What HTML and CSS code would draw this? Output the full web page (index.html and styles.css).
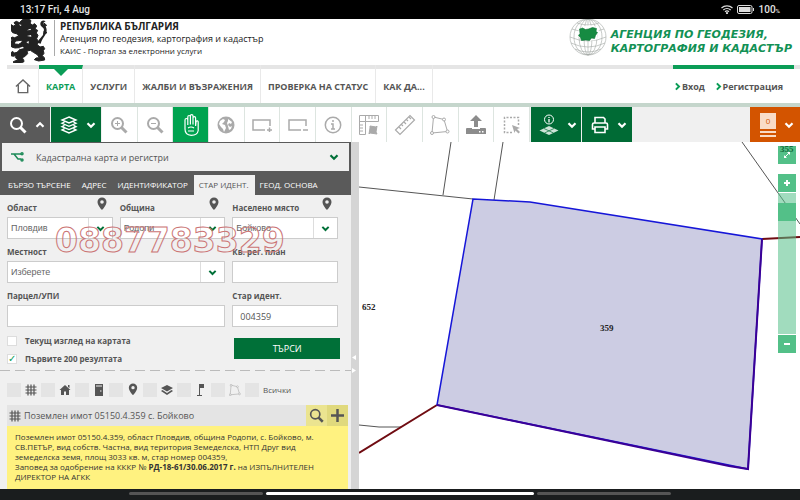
FILE: index.html
```html
<!DOCTYPE html>
<html lang="bg">

<head>
    <meta charset="UTF-8">
    <meta name="viewport" content="width=device-width, initial-scale=1.0">
    <title>КАИС - Портал за електронни услуги</title>
    <link rel="stylesheet" href="styles.css">
</head>

<body>
    <!-- shared icons -->
    <svg class="sprite" aria-hidden="true">
        <symbol id="chevron" viewBox="0 0 10 10"><path d="M1.500 3.200 5 6.700 8.500 3.200" fill="none" stroke="currentColor" stroke-width="2.200" /></symbol>
        <symbol id="search" viewBox="0 0 18 18"><circle cx="7.500" cy="7.500" r="5.500" fill="none" stroke="currentColor" stroke-width="2" /><path d="m11.500 11.500 5 5" stroke="currentColor" stroke-width="3" /></symbol>
        <symbol id="pin" viewBox="0 0 10 14"><path d="M5 .5A4.500 4.500 0 0 0 .5 5C.5 8.500 5 13 5 13s4.500-4.500 4.500-8A4.500 4.500 0 0 0 5 .5zm0 2.700a1.800 1.800 0 1 1 0 3.600 1.800 1.800 0 0 1 0-3.600z" fill="currentColor" /></symbol>
        <symbol id="grid" viewBox="0 0 12 12"><path d="M3 .5v11M6 .5v11M9 .5v11M.5 3h11M.5 6h11M.5 9h11" stroke="currentColor" stroke-width="1.200" /></symbol>
        <symbol id="polygon" viewBox="0 0 20 20"><path d="M3.500 2 14 4.500 17.500 16.500 2 18z" fill="none" stroke="currentColor" /><g fill="#fff" stroke="currentColor"><circle cx="3.500" cy="2" r="1.500" /><circle cx="14" cy="4.500" r="1.500" /><circle cx="17.500" cy="16.500" r="1.500" /><circle cx="2" cy="18" r="1.500" /></g></symbol>
    </svg>

    <div class="status">
        <span>13:17 Fri, 4 Aug</span>
        <span class="status__right">
            <svg width="12" height="9" viewBox="0 0 12 9" fill="none" stroke="#ddd" stroke-width="1.200"><path d="M.5 3a8 8 0 0 1 11 0M2.300 5a5.500 5.500 0 0 1 7.400 0M4 6.800a3 3 0 0 1 4 0" /><circle cx="6" cy="8" r=".5" /></svg>
            <svg width="18" height="9" viewBox="0 0 18 9"><rect x=".5" y=".5" width="14.500" height="8" rx="1.500" fill="none" stroke="#ddd" /><path d="M2 2h11.500v5H2zM16 3h1v3h-1z" fill="#ddd" /></svg>
            <span>100<small>%</small></span>
        </span>
    </div>

    <header class="header">
        <svg class="header__lion" width="37" height="44" viewBox="33 57 111 132" fill="#222" stroke="#222" stroke-width="3">
            <path d="M70 57h18l5 5-3 8 7 5 7-4 6 7-5 9 8 4-4 8 5 7-4 10 5 8-3 10 8 7 10-2 4 7-4 6 2 8-5 7 6 6 1 7-18 3-13-4 5-5 10-1-6-9-12-7-9-6-10 2 2 8-9 9-8 3 5 6 1 6-12 5-14 1-7-5 7-4 8-1-8-9 3-6-9 3-7-2-1-8 6-5 5 5 8-2 8-8-1-6-13 1-10-3-3-7 5-6 6-1 1 5 12 1 11-7-3-5-17 2-5 8-9-2-1-6 7-2-7-5 4-5 8 2 12-5-4-6-14-4-4-6-10 4-6-5 2-7 9-1-4-6 7-4 8 5 7-3-5-7 7-4 9 4z" />
            <path d="M112 128c5-14 22-20 20-38-1-10-12-8-11-20 1-8 11-12 16-5-7 0-9 6-4 10 7 6 10 18 3 29-5 9-11 14-14 27z" stroke="none" />
            <path d="m132 69 8 7-8 5zM132 92l9 6-10 5z" />
            <path d="m57 73 8 2-4 3zM91 86l-10 5 12-1zM93 105l-12 3 13 2zM79 126l8-2-2 7zM57 144l11-4 4 4-13 4z" fill="#fff" stroke="none" />
        </svg>
        <div class="header__titles">
            <strong>РЕПУБЛИКА БЪЛГАРИЯ</strong>
            <span>Агенция по геодезия, картография и кадастър</span>
            <small>КАИС - Портал за електронни услуги</small>
        </div>
        <svg class="header__globe" width="38" height="38" viewBox="0 0 38 38" fill="none" stroke="#a2a8a5" stroke-width=".6">
            <circle cx="19" cy="18" r="18" />
            <ellipse cx="19" cy="18" rx="14" ry="18" /><ellipse cx="19" cy="18" rx="9" ry="18" /><ellipse cx="19" cy="18" rx="4" ry="18" />
            <path d="M19 0v36M3 10q16 6 32 0M1 18q18 8 36 0M2 24q17 8 34 0M6 30q13 6 26 0M8 4q11 4 22 0" />
            <path d="M11 9q8-5 17-1l2 4-2 4 1 4q-9 4-18-1l-3-4z" fill="#fff" stroke="none" />
            <path d="m10.500 10 3-1 3 1.500 3-.5 4-1.500 4 1-.5 3 1.500 1-2 3-1 3-3-.5-2 2.500-4-.5-4 .5-1-3-2-2 1.500-2z" fill="#168b42" stroke="#0c7435" />
        </svg>
        <div class="header__agency">АГЕНЦИЯ ПО ГЕОДЕЗИЯ,<br>КАРТОГРАФИЯ И КАДАСТЪР</div>
    </header>

    <nav class="nav">
        <a class="nav__item nav__item--home" href="#" aria-label="Начало"><svg width="16" height="16" viewBox="0 0 17 16" fill="none" stroke="#666" stroke-width="1.500"><path d="m1 8.500 7.500-7 7.500 7M3.500 7v8h10V7" /></svg></a>
        <a class="nav__item nav__item--active" href="#">КАРТА</a>
        <a class="nav__item" href="#">УСЛУГИ</a>
        <a class="nav__item" href="#">ЖАЛБИ И ВЪЗРАЖЕНИЯ</a>
        <a class="nav__item" href="#">ПРОВЕРКА НА СТАТУС</a>
        <a class="nav__item" href="#">КАК ДА...</a>
        <div class="nav__user">
            <a href="#"><svg class="nav__arrow" width="9" height="9"><use href="#chevron" /></svg>Вход</a>
            <a href="#"><svg class="nav__arrow" width="9" height="9"><use href="#chevron" /></svg>Регистрация</a>
        </div>
    </nav>

    <div class="toolbar">
        <button class="tool tool--wide tool--grey" aria-label="Търсене"><svg width="18" height="18"><use href="#search" /></svg><svg class="up" width="10" height="10"><use href="#chevron" /></svg></button>
        <button class="tool tool--wide tool--dark" aria-label="Слоеве"><svg width="18" height="18" viewBox="0 0 18 18" fill="none" stroke="currentColor" stroke-width="1.400"><path d="m9 1 7 3-7 3-7-3zM4.500 6 2 7.300l7 3 7-3L13.500 6M4.500 9.300 2 10.600l7 3 7-3-2.500-1.300M4.500 12.600 2 13.900l7 3 7-3-2.500-1.300" /></svg><svg width="10" height="10"><use href="#chevron" /></svg></button>
        <div class="toolbar__group">
            <button class="tool" aria-label="Приближи"><svg width="18" height="18"><use href="#search" /><path d="M5 7.500h5M7.500 5v5" stroke="currentColor" /></svg></button>
            <button class="tool" aria-label="Отдалечи"><svg width="18" height="18"><use href="#search" /><path d="M5 7.500h5" stroke="currentColor" /></svg></button>
            <button class="tool tool--active" aria-label="Местене"><svg width="18" height="22" viewBox="0 0 18 22" fill="none" stroke="currentColor" stroke-width="1.200"><path d="M3 15V6q0-1.500 1.400-1.500T5.800 6v5V3q0-1.500 1.300-1.500T8.400 3v7.500V2q0-1.400 1.300-1.400T11 2v8.500V4q0-1.400 1.300-1.400T13.600 4v8l.4-4q.4-1.400 1.400-1.100t.8 1.600v8q-.7 4.800-7 4.800Q3 21 3 15zM6 14q3-2 6 0M6 17h6" /></svg></button>
            <button class="tool" aria-label="Цял изглед"><svg width="18" height="18" viewBox="0 0 18 18"><circle cx="9" cy="9" r="8.500" fill="currentColor" /><path d="m3 5 3-2 2 1-1 2-2 2 3 1 1 3-2 4-1-3-2-2-2-3zM11 3l4 3-1 2-2-1-1 2 2 2 2-1-1 3-2 1-1-4-1-3 1-2z" fill="#fff" /></svg></button>
            <button class="tool" aria-label="Приближи по правоъгълник"><svg width="20" height="14" viewBox="0 0 20 14" fill="none" stroke="currentColor" stroke-width="1.500"><path d="M13 12H1V2h17v6M15 12h5M17.500 9.500v5" /></svg></button>
            <button class="tool" aria-label="Отдалечи по правоъгълник"><svg width="20" height="14" viewBox="0 0 20 14" fill="none" stroke="currentColor" stroke-width="1.500"><path d="M13 12H1V2h17v6M15 12h5" /></svg></button>
            <button class="tool" aria-label="Информация"><svg width="18" height="18" viewBox="0 0 18 18" fill="none" stroke="currentColor" stroke-width="1.500"><circle cx="9" cy="9" r="7.700" /><path d="M9 4v2M7 8h2v5M7 13h4" /></svg></button>
            <button class="tool" aria-label="Мерене на площ"><svg width="22" height="22" viewBox="0 0 22 22" fill="none" stroke="currentColor"><path d="M1.500 1.500h19v6h-13v13h-6zM7.500 1.500v6h-6M11 2v3M14 2v3M17 2v3M2 11h3M2 14h3M2 17h3" /><path d="m12 12 6 1 1-1-1 6 1 2-7-1-1 1 1-6z" fill="currentColor" /></svg></button>
            <button class="tool" aria-label="Мерене на разстояние"><svg width="22" height="22" viewBox="0 0 22 22" fill="none" stroke="currentColor" stroke-width="1.200"><path d="M1.500 16 16 1.500l4.500 4.500L6 20.500zM5 13l2 2M7.500 10.500 9 12M10 8l2 2M12.500 5.500 14 7M15 3l2 2" /></svg></button>
            <button class="tool" aria-label="Полигон"><svg width="20" height="20"><use href="#polygon" /></svg></button>
            <button class="tool tool--strong" aria-label="Качване"><svg width="20" height="20" viewBox="0 0 20 20" fill="currentColor"><path d="m10 0 6 6h-4v6H8V6H4zM1 13h5v1h8v-1h5q1 0 1 1v5H0v-5q0-1 1-1z" /><path d="M13 16h1.500v1.500H13zM16 16h1.500v1.500H16z" fill="#fff" /></svg></button>
            <button class="tool" aria-label="Избор"><svg width="18" height="18" viewBox="0 0 18 18"><path d="M9 16.500H1.500v-15h14V9" fill="none" stroke="currentColor" stroke-width="1.500" stroke-dasharray="2 1.500" /><path d="m9 9 8 3-3 1 3 3-1.500 1.500-3-3-1 2.500z" fill="currentColor" /></svg></button>
        </div>
        <button class="tool tool--wide tool--dark" aria-label="Информация за слоеве"><svg width="20" height="22" viewBox="0 0 20 22"><g fill="none" stroke="currentColor"><circle cx="10" cy="5.500" r="4.500" /><path d="M10 3v1M10 5v3.500" stroke-width="1.300" /></g><path d="m10 12 9.500 4.500L10 21 .5 16.500z" fill="#cfe5d8" /><path d="m5 14.500 9.500 4.500M15 14.500 5.500 19" stroke="#006b35" stroke-width=".7" /></svg><svg width="10" height="10"><use href="#chevron" /></svg></button>
        <button class="tool tool--wide tool--dark" aria-label="Печат"><svg width="18" height="18" viewBox="0 0 18 18" fill="none" stroke="currentColor" stroke-width="1.600"><path d="M4 7V1.500h8.500L14 3v4M4 13H1.500V8.500q0-1.500 1.500-1.500h12q1.500 0 1.500 1.500V13H14M4 11h10v5.500H4z" /></svg><svg width="10" height="10"><use href="#chevron" /></svg></button>
        <button class="tool tool--wide tool--cart" aria-label="Количка"><span class="cart">0</span><svg width="10" height="10"><use href="#chevron" /></svg></button>
    </div>

    <main class="main">
        <section class="panel">
            <button class="source">
                <svg width="14" height="10" viewBox="0 0 14 10" fill="none" stroke="#1d8a58" stroke-width="1.500"><path d="M1 2h3l4 5h3M4 2h7" /><circle cx="12" cy="1.800" r="1" /><circle cx="12" cy="8" r="1" /></svg>
                <span>Кадастрална карта и регистри</span>
                <svg class="green" width="10" height="10"><use href="#chevron" /></svg>
            </button>
            <div class="tabs">
                <a href="#">БЪРЗО ТЪРСЕНЕ</a>
                <a href="#">АДРЕС</a>
                <a href="#">ИДЕНТИФИКАТОР</a>
                <a class="active" href="#">СТАР ИДЕНТ.</a>
                <a href="#">ГЕОД. ОСНОВА</a>
            </div>

            <form class="form">
                <div class="field">
                    <label for="region">Област</label><svg class="field__pin" width="10" height="14"><use href="#pin" /></svg>
                    <div class="select"><select id="region"><option>Пловдив</option></select><svg width="9" height="9"><use href="#chevron" /></svg></div>
                </div>
                <div class="field">
                    <label for="municipality">Община</label><svg class="field__pin" width="10" height="14"><use href="#pin" /></svg>
                    <div class="select"><select id="municipality"><option>Родопи</option></select><svg width="9" height="9"><use href="#chevron" /></svg></div>
                </div>
                <div class="field">
                    <label for="place">Населено място</label><svg class="field__pin" width="10" height="14"><use href="#pin" /></svg>
                    <div class="select"><select id="place"><option>Бойково</option></select><svg width="9" height="9"><use href="#chevron" /></svg></div>
                </div>
                <div class="field field--double">
                    <label for="locality">Местност</label>
                    <div class="select"><select id="locality"><option>Изберете</option></select><svg width="9" height="9"><use href="#chevron" /></svg></div>
                </div>
                <div class="field">
                    <label for="block">Кв. рег. план</label>
                    <input id="block" type="text">
                </div>
                <div class="field field--double">
                    <label for="parcel">Парцел/УПИ</label>
                    <input id="parcel" type="text">
                </div>
                <div class="field">
                    <label for="old">Стар идент.</label>
                    <input id="old" type="text" value="004359">
                </div>
                <div class="field--double checks">
                    <label><input type="checkbox">Текущ изглед на картата</label>
                    <label><input type="checkbox" checked>Първите 200 резултата</label>
                </div>
                <button class="form__submit" type="button">ТЪРСИ</button>
                <div class="phone">0887783329</div>
            </form>

            <div class="filters">
                <input type="checkbox" aria-label="Имоти"><svg width="12" height="12"><use href="#grid" /></svg>
                <input type="checkbox" aria-label="Сгради"><svg width="12" height="12" viewBox="0 0 12 12" fill="currentColor"><path d="m6 1 5.500 5H10v5H7V7.500H5V11H2V6H.5zM9 1h1.500v3L9 3z" /></svg>
                <input type="checkbox" aria-label="Обекти"><svg width="12" height="12" viewBox="0 0 12 12"><path d="M2 0h8v12H2z" fill="currentColor" /><path d="M3 2h6M7 7h1.500" stroke="#f0f0f0" /></svg>
                <input type="checkbox" aria-label="Точки"><svg width="12" height="13"><use href="#pin" /></svg>
                <input type="checkbox" aria-label="Слоеве"><svg width="12" height="12" viewBox="0 0 12 12" fill="currentColor"><path d="m6 1 6 3-6 3.500L0 4zM1.500 6 0 7l6 4 6-4-1.500-1L6 9z" /></svg>
                <input type="checkbox" aria-label="Геодезическа основа"><svg width="12" height="14" viewBox="0 0 12 14" fill="currentColor"><path d="M4 1h5v4H5v7h2v1H2v-1h2z" /></svg>
                <input type="checkbox" aria-label="Полигони"><svg class="light" width="12" height="12"><use href="#polygon" /></svg>
                <label><input type="checkbox">Всички</label>
            </div>

            <article class="result">
                <div class="result__head">
                    <svg width="12" height="12"><use href="#grid" /></svg>
                    <h2>Поземлен имот 05150.4.359 с. Бойково</h2>
                    <button aria-label="Покажи"><svg width="15" height="15" viewBox="0 0 18 18"><use href="#search" width="18" height="18" /></svg></button>
                    <button aria-label="Добави"><svg width="13" height="13" viewBox="0 0 13 13"><path d="M6.500 0v13M0 6.500h13" stroke="currentColor" stroke-width="2.500" /></svg></button>
                </div>
                <p class="result__text">Поземлен имот 05150.4.359, област Пловдив, община Родопи, с. Бойково, м.<br>СВ.ПЕТЪР, вид собств. Частна, вид територия Земеделска, НТП Друг вид<br>земеделска земя, площ 3033 кв. м, стар номер 004359,<br>Заповед за одобрение на КККР № <b>РД-18-61/30.06.2017 г.</b> на ИЗПЪЛНИТЕЛЕН<br>ДИРЕКТОР НА АГКК</p>
            </article>
        </section>

        <div class="splitter">
            <svg width="6" height="20" viewBox="0 0 6 20" fill="#fff"><path d="M5 1v5L1 3.500zM1 14v5l4-2.500z" /></svg>
        </div>

        <section class="map">
            <svg class="map__canvas" viewBox="0 0 441 347" preserveAspectRatio="xMinYMin slice">
                <path class="map__line" d="M0 45 114 57M92 0 84 53M144 0 135 58M383 0 441 82M0 283 20 285H42" />
                <path class="map__border" d="M0 311 78 263M403 97 441 95" />
                <path class="map__plot" d="M114 57 171 60 403 97 389 327 78 263z" />
                <path class="map__edge" d="M403 97 389 327 370 324 78 263" />
                <text x="3" y="168">652</text>
                <text x="241" y="189">359</text>
            </svg>
            <div class="zoom">
                <button aria-label="Цял екран"><svg width="8" height="8" viewBox="0 0 8 8" fill="#fff"><path d="M4 1h3v3zM1 4l3 3H1z" /><path d="m2 6 4-4" stroke="#fff" /></svg><span>355</span></button>
                <button class="zoom__in" aria-label="Приближи"><svg width="6" height="6" viewBox="0 0 6 6"><path d="M3 0v6M0 3h6" stroke="#fff" stroke-width="2" /></svg></button>
                <div class="zoom__track"><div class="zoom__handle"></div></div>
                <button aria-label="Отдалечи"><svg width="6" height="6" viewBox="0 0 6 6"><path d="M0 3h6" stroke="#fff" stroke-width="2" /></svg></button>
            </div>
        </section>
    </main>

    <div class="bottom"><span></span><span class="current"></span><span></span></div>
</body>

</html>
```
FILE: styles.css
```css
* {
    box-sizing: border-box;
}

body {
    margin: 0;
    min-height: 100vh;
    display: flex;
    flex-direction: column;
    font-family: "Open Sans", "Noto Sans", sans-serif;
    font-size: 9px;
    color: #555;
    background-color: #fff;
}

a {
    color: inherit;
    text-decoration: none;
}

button,
input,
select {
    font: inherit;
    color: inherit;
    margin: 0;
    padding: 0;
    border: 0;
    border-radius: 0;
    background: none;
}

svg {
    flex: none;
    display: block;
}

.sprite {
    position: absolute;
    width: 0;
    height: 0;
}

.green {
    color: #007038;
}

.up {
    transform: rotate(180deg);
}

/* device status bar */
.status {
    height: 19px;
    padding: 0 20px;
    display: flex;
    align-items: center;
    justify-content: space-between;
    background-color: #000;
    color: #e4e4e4;
    font: 500 10px Roboto, sans-serif;
}

.status__right {
    display: flex;
    align-items: center;
    gap: 4px;
}

.status small {
    font-size: 6px;
}

/* header */
.header {
    height: 46px;
    padding: 0 8px 0 11px;
    display: flex;
    align-items: flex-start;
}

.header__titles {
    margin: 1px 0 0 6px;
    padding-left: 5px;
    height: 36px;
    display: flex;
    flex-direction: column;
    border-left: 1px solid #aaa;
    color: #222;
    white-space: nowrap;
}

.header__titles strong {
    font-size: 10px;
    line-height: 13px;
}

.header__titles span {
    font-size: 9px;
    line-height: 12px;
}

.header__titles small {
    font-size: 8px;
    line-height: 12px;
}

.header__globe {
    margin-left: auto;
}

.header__agency {
    margin: 9px 0 0 4px;
    color: #129155;
    font: italic bold 11px/14px "DejaVu Sans", sans-serif;
    white-space: nowrap;
}

/* main menu */
.nav {
    height: 42px;
    padding: 0 6px 0 7px;
    display: flex;
    border-bottom: 4px solid #c5d6cc;
    font-weight: 700;
    background: linear-gradient(#e5e5e5 4px, transparent 4px) 7px 0 no-repeat;
}

.nav__item {
    padding: 4px 7px 0;
    display: flex;
    align-items: center;
    border-right: 1px solid #e9e9e9;
    white-space: nowrap;
}

.nav__item--home {
    padding-left: 8px;
}

.nav__item--active {
    position: relative;
    border-top: 4px solid #0b9d57;
    padding-top: 0;
    color: #0b9d57;
}

.nav__item--active::before {
    content: "";
    position: absolute;
    top: 0;
    left: 50%;
    margin-left: -7px;
    border: 7px solid transparent;
    border-top-color: #0b9d57;
    border-bottom: 0;
}

.nav__user {
    width: 121px;
    margin-left: auto;
    display: flex;
    align-items: center;
    justify-content: space-between;
    padding-right: 11px;
    border-top: 4px solid #0b9d57;
}

.nav__user a {
    display: flex;
    align-items: center;
}

.nav__arrow {
    color: #0b9d57;
    transform: rotate(-90deg);
}

/* map tools */
.toolbar {
    height: 35px;
    display: flex;
    gap: 1px;
    background-color: #f0f0f0;
}

.toolbar__group {
    flex: 0 0 428px;
    display: flex;
    background-color: #fff;
}

.tool {
    flex: 1;
    display: flex;
    align-items: center;
    justify-content: center;
    border-right: 1px solid #dde5e0;
    color: #aaa;
}

.tool--strong {
    color: #8c8c8c;
}

.tool--active {
    background-color: #00a350;
    color: #fff;
}

.tool--wide {
    flex: 0 0 50px;
    gap: 8px;
    padding-left: 4px;
    border: 0;
    color: #fff;
}

.tool--grey {
    background-color: #5a5a5a;
}

.tool--dark {
    background-color: #006b35;
}

.tool--cart {
    margin-left: auto;
    background-color: #d35400;
}

.cart {
    width: 16px;
    height: 24px;
    border-bottom: 2px solid #f9dcc7;
    background: linear-gradient(#f9dcc7 16px, transparent 16px, transparent 18px, #f9dcc7 18px, #f9dcc7 20px, transparent 20px);
    color: #d35400;
    font-size: 8px;
    line-height: 16px;
}

.main {
    flex: 1;
    display: flex;
}

/* search panel */
.panel {
    flex: 0 0 351px;
    min-width: 0;
    background-color: #f0f0f0;
}

.source {
    width: 100%;
    height: 33px;
    padding: 0 10px 0 8px;
    display: flex;
    align-items: center;
    gap: 12px;
    border: solid #5a5a5a;
    border-width: 1px 2px 4px;
    background-color: #f0f0f0;
    text-align: left;
}

.source span {
    flex: 1;
}

.tabs {
    height: 20px;
    padding-left: 3px;
    display: flex;
    background-color: #5a5a5a;
    color: #fff;
    font-size: 8px;
    line-height: 20px;
    white-space: nowrap;
}

.tabs a {
    padding: 0 6px 0 5px;
}

.tabs .active {
    background-color: #f0f0f0;
    color: #555;
}

.form {
    position: relative;
    padding: 6px 13px 4px 7px;
    display: grid;
    grid-template-columns: repeat(3, 1fr);
    gap: 6px 7px;
}

.field {
    position: relative;
}

.field--double {
    grid-column: span 2;
}

.field label {
    display: block;
    height: 16px;
    font-size: 8px;
    font-weight: 700;
    line-height: 13px;
}

.field__pin {
    position: absolute;
    top: -4px;
    right: 6px;
}

.field > input,
.select {
    display: block;
    width: 100%;
    height: 22px;
    border: 1px solid #ccc;
    background-color: #fff;
}

.field > input {
    padding: 0 7px;
}

.select {
    display: flex;
    align-items: center;
    padding-right: 7px;
    color: #007038;
}

.select select {
    flex: 1;
    height: 100%;
    min-width: 0;
    margin-right: 7px;
    padding-left: 3px;
    border-right: 1px solid #ddd;
    appearance: none;
    color: #666;
    font-family: "Liberation Sans", sans-serif;
}

.checks {
    padding-top: 1px;
    display: flex;
    flex-direction: column;
    gap: 4px;
    font-size: 8px;
    font-weight: 700;
    line-height: 14px;
}

.checks label {
    display: flex;
    align-items: center;
    gap: 8px;
}

.checks input {
    appearance: none;
    width: 10px;
    height: 10px;
    border: 1px solid #ddd;
    background-color: #fff;
}

.checks input:checked::before {
    content: "✓";
    display: block;
    color: #0b9d57;
    font: bold 10px/8px "DejaVu Sans", sans-serif;
}

.form__submit {
    height: 21px;
    margin: 5px -2px 0 2px;
    background-color: #007038;
    color: #fff;
}

.phone {
    position: absolute;
    top: 27px;
    left: 55px;
    color: transparent;
    font: bold 33px/38px "DejaVu Sans", sans-serif;
    -webkit-text-stroke: 1px #cb7474;
    pointer-events: none;
}

.filters {
    height: 35px;
    padding: 4px 0 0 7px;
    display: flex;
    align-items: center;
    gap: 4px;
    background: repeating-linear-gradient(90deg, #bbb 0 10px, transparent 10px 15px) top / 100% 1px no-repeat;
    font-size: 8px;
}

.filters .light {
    color: #aaa;
}

.filters input {
    appearance: none;
    width: 14px;
    height: 14px;
    background-color: #e4e4e4;
}

.filters label {
    display: flex;
    align-items: center;
    gap: 4px;
}

.result {
    margin: 0 3px 0 7px;
    background-color: #fff280;
}

.result__head {
    height: 21px;
    padding-left: 2px;
    display: flex;
    align-items: center;
    gap: 3px;
    background-color: #e4e4e4;
}

.result__head h2 {
    flex: 1;
    margin: 0;
    font-size: 9px;
    font-weight: 400;
}

.result__head button {
    width: 21px;
    height: 21px;
    display: flex;
    align-items: center;
    justify-content: center;
    background-color: #ebe490;
}

.result__head button + button {
    margin-left: -3px;
    background-color: #e0d97d;
}

.result__text {
    margin: 0;
    padding: 6px 8px 7px;
    color: #333;
    font-size: 8px;
    line-height: 10px;
    white-space: nowrap;
}

.splitter {
    flex: 0 0 8px;
    display: flex;
    align-items: center;
    padding-top: 96px;
    background-color: #d5d5d5;
}

/* map */
.map {
    position: relative;
    flex: 1;
    overflow: hidden;
}

.map__canvas {
    position: absolute;
    width: 100%;
    height: 100%;
    fill: none;
}

.map__line {
    stroke: #555;
    stroke-width: 1;
}

.map__border {
    stroke: #700c12;
    stroke-width: 2;
}

.map__plot {
    fill: #cccce3;
    stroke: #1616d8;
    stroke-width: 1.5;
}

.map__edge {
    stroke: #3a0096;
    stroke-width: 2;
}

.map text {
    fill: #222;
    font: bold 9px "Liberation Serif", serif;
}

.zoom {
    position: absolute;
    top: 4px;
    right: 4px;
    width: 18px;
}

.zoom button {
    position: relative;
    width: 18px;
    height: 18px;
    display: flex;
    align-items: center;
    justify-content: center;
    background-color: #53c088;
}

.zoom button span {
    position: absolute;
    top: -2px;
    left: 2px;
    color: #126b3a;
    font: bold 9px "Liberation Serif", serif;
}

.zoom .zoom__in {
    margin-top: 10px;
}

.zoom__track {
    height: 141px;
    margin: 1px 0;
    padding-top: 10px;
    background-color: rgba(83, 192, 136, 0.55);
}

.zoom__handle {
    height: 18px;
    background-color: #53c088;
}

.bottom {
    height: 11px;
    padding-top: 3px;
    display: flex;
    justify-content: center;
    gap: 3px;
    background-color: #1a1d1e;
}

.bottom span {
    width: 134px;
    height: 3px;
    border-radius: 2px;
    background-color: #555;
}

.bottom .current {
    width: 268px;
    background-color: #fff;
}
```
